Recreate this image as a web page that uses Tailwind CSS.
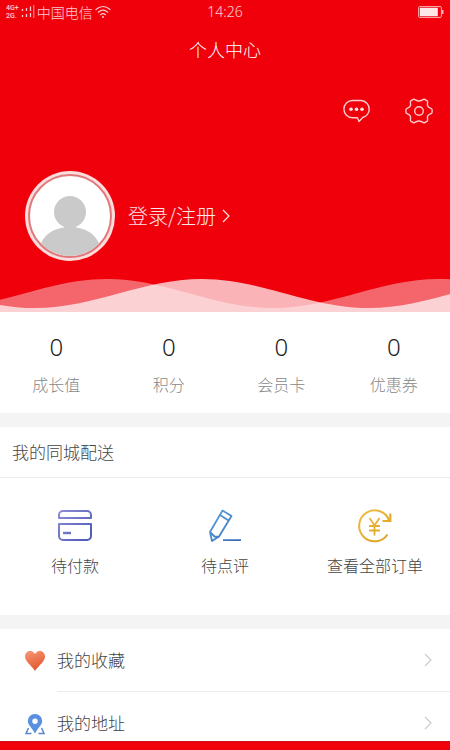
<!DOCTYPE html>
<html lang="zh-CN">
<head>
<meta charset="utf-8">
<meta name="viewport" content="width=device-width, initial-scale=1">
<title>个人中心</title>
<script src="https://cdn.jsdelivr.net/npm/@tailwindcss/browser@4"></script>
</head>
<body class="flex h-screen flex-col overflow-hidden bg-white font-['Noto_Sans_CJK_SC',sans-serif] font-light text-[#444]">
<div class="min-h-0 flex-1 overflow-y-auto [scrollbar-width:none]">
  <header class="bg-[#ef000b] text-white">
    <div class="grid h-6 grid-cols-3 items-center pr-1.5 pl-1.5 text-white/80">
      <div class="flex items-center gap-0.5">
        <div class="font-['Roboto',sans-serif] text-[7px] leading-2 font-medium"><p>4G+</p><p>2G.</p></div>
        <svg class="h-3.5 w-3.5 shrink-0" viewBox="0 0 14 14" fill="none" stroke="currentColor" stroke-width="1.3" aria-hidden="true"><path d="M1.5 4v2M5.500 3v3M9.500 1.500v4.500M1.500 10v2M5.500 9v3M9.500 8v4"/><path d="M12.800 0v13" stroke-width=".8"/></svg>
        <span class="text-sm leading-5 whitespace-nowrap">中国电信</span>
        <svg class="h-3.5 w-4 shrink-0" viewBox="0 0 16 14" fill="none" stroke="currentColor" stroke-width="1.2" stroke-linecap="round" aria-hidden="true"><path d="M1 4.500Q8-1.500 15 4.500M3.300 7.200Q8 3.200 12.700 7.200M5.600 9.700Q8 7.700 10.400 9.700"/><circle cx="8" cy="12" r="1" fill="currentColor" stroke="none"/></svg>
      </div>
      <time class="text-center font-['Noto_Sans',sans-serif] text-sm leading-5">14:26</time>
      <svg class="h-3 w-[26px] justify-self-end" viewBox="0 0 26 12" aria-label="电池"><rect x=".6" y=".6" width="22.800" height="10.800" rx="1" fill="none" stroke="#fff" stroke-opacity=".7"/><rect x="1.800" y="1.800" width="18" height="8.400" fill="#fff" fill-opacity=".9"/><path d="M24 4h1.500v4H24z" fill="#fff" fill-opacity=".7"/></svg>
    </div>
    <h1 class="pt-3 text-center text-lg leading-[26px] font-light">个人中心</h1>
    <div class="flex justify-end gap-8 px-4 pt-[34px]">
      <button type="button" aria-label="消息" class="flex h-[30px] w-[30px] items-center justify-center">
        <svg class="h-7 w-7" viewBox="0 0 28 28" fill="none" stroke="#fff" stroke-opacity=".8" stroke-width="1.400" stroke-linejoin="round"><path d="M9.500 3.500H18a8.500 8.500 0 0 1 8.200 8.700c0 3.800-2.600 7.200-6.200 8l-4 4.200-1.600-3.700H9.500A8.600 8.600 0 0 1 9.500 3.500z"/><g fill="#fff" fill-opacity=".9" stroke="none"><circle cx="8" cy="12.200" r="1.800"/><circle cx="13.500" cy="12.200" r="1.800"/><circle cx="19" cy="12.200" r="1.800"/></g></svg>
      </button>
      <button type="button" aria-label="设置" class="flex h-[30px] w-[30px] items-center justify-center">
        <svg class="h-7 w-7" viewBox="0 0 28 28" fill="none" stroke="#fff" stroke-opacity=".8" stroke-width="1.400" stroke-linejoin="round"><path d="M8.300 2.400C10 1.600 10.800 4 14 4s4-2.400 5.700-1.600l2.500 1.500c1.500 1-.8 2.800.6 5.300 1.400 2.500 4.300 1.400 4.300 3.600v2.400c0 2.200-2.900 1.100-4.300 3.600-1.400 2.500.9 4.300-.6 5.300l-2.500 1.500C18 26.400 17.200 24 14 24s-4 2.400-5.700 1.600l-2.500-1.500c-1.500-1 .8-2.800-.6-5.300C3.800 16.300.9 17.400.9 15.200v-2.400c0-2.200 2.900-1.100 4.300-3.600 1.400-2.500-.9-4.300.6-5.300z"/><circle cx="14" cy="14" r="4.300"/></svg>
      </button>
    </div>
    <a href="#login" class="mt-[45px] ml-[25px] flex w-fit items-center gap-[13px]">
      <svg class="h-[90px] w-[90px]" viewBox="0 0 90 90" aria-hidden="true"><defs><clipPath id="face"><circle cx="45" cy="45" r="40"/></clipPath></defs><circle cx="45" cy="45" r="45" fill="#fcdcdc"/><circle cx="45" cy="45" r="41" fill="#fff" stroke="#e0797c" stroke-width="2"/><g fill="#cacaca" clip-path="url(#face)"><circle cx="45" cy="41" r="16"/><path d="M40 54h10q0 3 4 3c10 2 18 8 21 18v15H15V75c3-10 11-16 21-18q4 0 4-3z"/></g></svg>
      <span class="flex items-center gap-1.5 text-xl leading-7 text-white/90">登录/注册
        <svg class="h-3.5 w-2" viewBox="0 0 8 14" fill="none" stroke="currentColor" stroke-width="1.200" aria-hidden="true"><path d="m1 1 6 6-6 6"/></svg>
      </span>
    </a>
    <svg class="mt-[17px] block h-[34px] w-full" viewBox="0 0 450 34" preserveAspectRatio="none" fill="#fff" aria-hidden="true">
      <path fill-opacity=".4" d="M-59 30C1 30 47 1 107 1S213 30 273 30 379 1 439 1 545 30 605 30V34H-59z"/>
      <path fill-opacity=".7" d="M-131 1C-71 1-25 30 35 30S142 1 202 1 309 30 369 30 475 1 535 1V34H-131z"/>
    </svg>
  </header>

  <main>
    <dl class="grid h-[101px] grid-cols-4 pt-5 text-center">
      <div class="flex flex-col-reverse justify-end gap-2.5"><dt class="text-base leading-6 text-[#888]">成长值</dt><dd class="font-['Noto_Sans',sans-serif] text-2xl leading-[30px] text-[#222]">0</dd></div>
      <div class="flex flex-col-reverse justify-end gap-2.5"><dt class="text-base leading-6 text-[#888]">积分</dt><dd class="font-['Noto_Sans',sans-serif] text-2xl leading-[30px] text-[#222]">0</dd></div>
      <div class="flex flex-col-reverse justify-end gap-2.5"><dt class="text-base leading-6 text-[#888]">会员卡</dt><dd class="font-['Noto_Sans',sans-serif] text-2xl leading-[30px] text-[#222]">0</dd></div>
      <div class="flex flex-col-reverse justify-end gap-2.5"><dt class="text-base leading-6 text-[#888]">优惠券</dt><dd class="font-['Noto_Sans',sans-serif] text-2xl leading-[30px] text-[#222]">0</dd></div>
    </dl>

    <section class="border-y-[14px] border-[#f4f4f4]">
      <h2 class="border-b border-[#ececec] px-3 py-3 text-[17px] leading-[26px] font-light">我的同城配送</h2>
      <nav class="grid grid-cols-3 pt-7 pb-[38px] text-center text-base leading-6">
        <a href="#pay" class="flex flex-col items-center gap-[7px]">
          <svg class="h-10 w-10" viewBox="0 0 40 40" fill="none" stroke-width="2" stroke-linejoin="round" aria-hidden="true"><defs><linearGradient id="card" gradientUnits="userSpaceOnUse" x1="3" y1="5" x2="37" y2="35"><stop stop-color="#8c8ed6"/><stop offset="1" stop-color="#4a56b4"/></linearGradient></defs><g stroke="url(#card)"><path d="M4 12V9a4 4 0 0 1 4-4h24a4 4 0 0 1 4 4v3zM4 18h32v12a4 4 0 0 1-4 4H8a4 4 0 0 1-4-4z"/><path d="M8 27h8" stroke-width="2.400"/></g></svg>
          待付款
        </a>
        <a href="#review" class="flex flex-col items-center gap-[7px]">
          <svg class="h-10 w-10" viewBox="0 0 40 40" fill="none" stroke-width="1.800" stroke-linejoin="round" aria-hidden="true"><defs><linearGradient id="pen" gradientUnits="userSpaceOnUse" x1="5" y1="4" x2="36" y2="36"><stop stop-color="#5aa5e2"/><stop offset="1" stop-color="#3767b0"/></linearGradient></defs><path stroke="url(#pen)" d="M17.500 4.500 26.500 10 14 30.500 7 35 5 26zM15 9l8.500 5.500M5 26l4.500 4.500 4.500.500M18 34.200h18"/></svg>
          待点评
        </a>
        <a href="#orders" class="flex flex-col items-center gap-[7px]">
          <svg class="h-10 w-10" viewBox="0 0 40 40" fill="none" stroke-width="2" aria-hidden="true"><defs><linearGradient id="coin" gradientUnits="userSpaceOnUse" x1="5" y1="4" x2="35" y2="36"><stop stop-color="#f0bd42"/><stop offset="1" stop-color="#dda01c"/></linearGradient></defs><g stroke="url(#coin)"><path d="M32.500 28.500A15.500 15.500 0 1 1 34 14"/><path d="M35.300 7.500V15H27.500" stroke-width="2.200"/><path d="m14.500 12 5 7.500 5-7.500M19.500 19.500v10M14 20h11M14 24.500h11" stroke-width="1.800"/></g></svg>
          查看全部订单
        </a>
      </nav>
    </section>

    <ul class="text-[17px] leading-[26px]">
      <li><a href="#favorites" class="flex items-center pl-6">
        <svg class="h-[22px] w-[22px]" viewBox="0 0 22 22" aria-hidden="true"><defs><linearGradient id="heart" x2=".4" y2="1"><stop stop-color="#f79a77"/><stop offset="1" stop-color="#e2582f"/></linearGradient></defs><path fill="url(#heart)" d="M11 4C9.500 1.500 7.500 1 6 1 3 1 1 3.500 1 6.500c0 5 6 8.500 10 14.500 4-6 10-9.500 10-14.500C21 3.500 19 1 16 1c-1.500 0-3.500.5-5 3z"/></svg>
        <span class="ml-[11px] flex flex-1 items-center justify-between border-b border-[#ececec] py-[18px] pr-[18px]">我的收藏
          <svg class="h-3.5 w-2" viewBox="0 0 8 14" fill="none" stroke="#ccc" stroke-width="1.200" aria-hidden="true"><path d="m1 1 6 6-6 6"/></svg>
        </span>
      </a></li>
      <li><a href="#address" class="flex items-center pl-6">
        <svg class="h-[22px] w-[22px]" viewBox="0 0 22 22" aria-hidden="true"><path fill="none" stroke="#5a86cc" stroke-width="1.500" d="M4.500 15 2 20.500h5.500M17.500 15l2.500 5.500h-5.500"/><path fill="#5990e0" fill-rule="evenodd" d="M11 1a7 7 0 0 0-7.200 7.100C3.800 12 8 15 11 20.500c3-5.500 7.200-8.500 7.200-12.400A7 7 0 0 0 11 1zm0 4.500a2.700 2.700 0 1 1 0 5.400 2.700 2.700 0 0 1 0-5.400z"/></svg>
        <span class="ml-[11px] flex flex-1 items-center justify-between border-b border-[#ececec] py-[18px] pr-[18px]">我的地址
          <svg class="h-3.5 w-2" viewBox="0 0 8 14" fill="none" stroke="#ccc" stroke-width="1.200" aria-hidden="true"><path d="m1 1 6 6-6 6"/></svg>
        </span>
      </a></li>
    </ul>
  </main>
</div>
<footer class="h-[9px] shrink-0 border-t border-[#c8101a] bg-[#ef000b]"></footer>
</body>
</html>
